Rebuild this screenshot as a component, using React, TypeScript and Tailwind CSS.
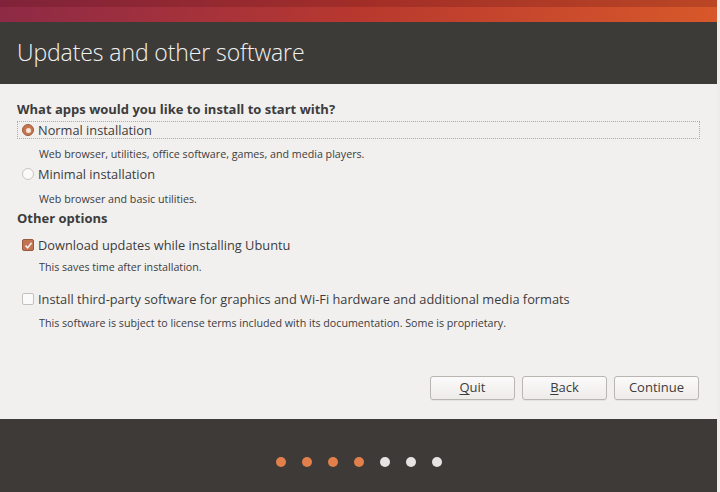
import React from "react";

const font = { fontFamily: '"Open Sans", "Noto Sans", "DejaVu Sans", sans-serif' };

function Radio({ checked }: { checked: boolean }) {
  return checked ? (
    <span className="flex h-[12px] w-[12px] items-center justify-center rounded-full border border-[#9a5a3c] bg-[#c9764f]">
      <span className="h-[5px] w-[5px] rounded-full bg-[#f6e6dc]" />
    </span>
  ) : (
    <span className="h-[12px] w-[12px] rounded-full border border-[#c9c6c2] bg-[#fbfafa]" />
  );
}

function Check({ checked }: { checked: boolean }) {
  return checked ? (
    <span className="flex h-[12px] w-[12px] items-center justify-center rounded-[2px] border border-[#9a5a3c] bg-[#c27452]">
      <svg width="9" height="9" viewBox="0 0 9 9">
        <path d="M1.5 4.6 L3.7 6.8 L7.6 1.8" stroke="#f7ece6" strokeWidth="1.6" fill="none" />
      </svg>
    </span>
  ) : (
    <span className="h-[12px] w-[12px] rounded-[2px] border border-[#c4c1bd] bg-[#fbfafa]" />
  );
}

function Btn({ label, ul }: { label: string; ul?: boolean }) {
  return (
    <button
      className="h-[24px] w-[85px] rounded-[3px] border border-[#b9b5b1] bg-gradient-to-b from-[#fbfafa] to-[#eeecea] text-[13px] text-[#3c3c3c] shadow-[0_1px_0_rgba(0,0,0,0.05)]"
      style={font}
    >
      {ul ? (
        <>
          <span className="underline underline-offset-2">{label[0]}</span>
          {label.slice(1)}
        </>
      ) : (
        label
      )}
    </button>
  );
}

export default function App() {
  const dots = [true, true, true, true, false, false, false];
  return (
    <div className="flex h-[492px] w-[720px] overflow-hidden bg-[#efedeb]" style={font}>
      <div className="flex w-[717px] flex-col">
        <div className="h-[22px] bg-gradient-to-r from-[#8e2a45] via-[#b8382e] to-[#d8582a]">
          <div className="h-[7px] bg-[rgba(80,10,20,0.22)]" />
        </div>
        <div className="flex h-[62px] items-center bg-[#3d3b38] pl-[17px]">
          <h1 className="pb-[2px] text-[23px] font-light leading-none tracking-[-0.1px] text-[#f2f2f2]">
            Updates and other software
          </h1>
        </div>
        <div className="flex h-[335px] flex-col bg-[#f2f0ef] pl-[17px] pr-[17px] pt-[17px] text-[#3c3c3c]">
          <div className="text-[13px] font-bold leading-[16px] text-[#3c3c3c]">
            What apps would you like to install to start with?
          </div>
          <div className="mt-[4px] flex h-[18px] items-center gap-[4px] border border-dotted border-[#b9a8a0] pl-[4px]">
            <Radio checked />
            <span className="text-[12.8px] leading-none">Normal installation</span>
          </div>
          <div className="mt-[8px] pl-[22px] text-[10.7px] leading-[14px]">
            Web browser, utilities, office software, games, and media players.
          </div>
          <div className="mt-[4px] flex h-[18px] items-center gap-[4px] pl-[5px]">
            <Radio checked={false} />
            <span className="text-[12.8px] leading-none">Minimal installation</span>
          </div>
          <div className="mt-[9px] pl-[22px] text-[10.7px] leading-[14px]">Web browser and basic utilities.</div>
          <div className="mt-[4px] text-[13px] font-bold leading-[16px]">Other options</div>
          <div className="mt-[10px] flex h-[18px] items-center gap-[4px] pl-[5px]">
            <Check checked />
            <span className="text-[12.8px] leading-none">Download updates while installing Ubuntu</span>
          </div>
          <div className="mt-[6px] pl-[22px] text-[10.7px] leading-[14px]">This saves time after installation.</div>
          <div className="mt-[16px] flex h-[18px] items-center gap-[4px] pl-[5px]">
            <Check checked={false} />
            <span className="text-[12.8px] leading-none">
              Install third-party software for graphics and Wi-Fi hardware and additional media formats
            </span>
          </div>
          <div className="mt-[8px] pl-[22px] text-[10.7px] leading-[14px]">
            This software is subject to license terms included with its documentation. Some is proprietary.
          </div>
          <div className="mb-[19px] mr-[1px] mt-auto flex justify-end gap-[7px]">
            <Btn label="Quit" ul />
            <Btn label="Back" ul />
            <Btn label="Continue" />
          </div>
        </div>
        <div className="flex flex-1 items-start justify-center bg-[#3e3a38] pt-[38px]">
          <div className="flex gap-[16px]">
            {dots.map((d, i) => (
              <span
                key={i}
                className={d ? "h-[10px] w-[10px] rounded-full bg-[#e2804c]" : "h-[10px] w-[10px] rounded-full bg-[#e6e4e2]"}
              />
            ))}
          </div>
        </div>
      </div>
    </div>
  );
}
